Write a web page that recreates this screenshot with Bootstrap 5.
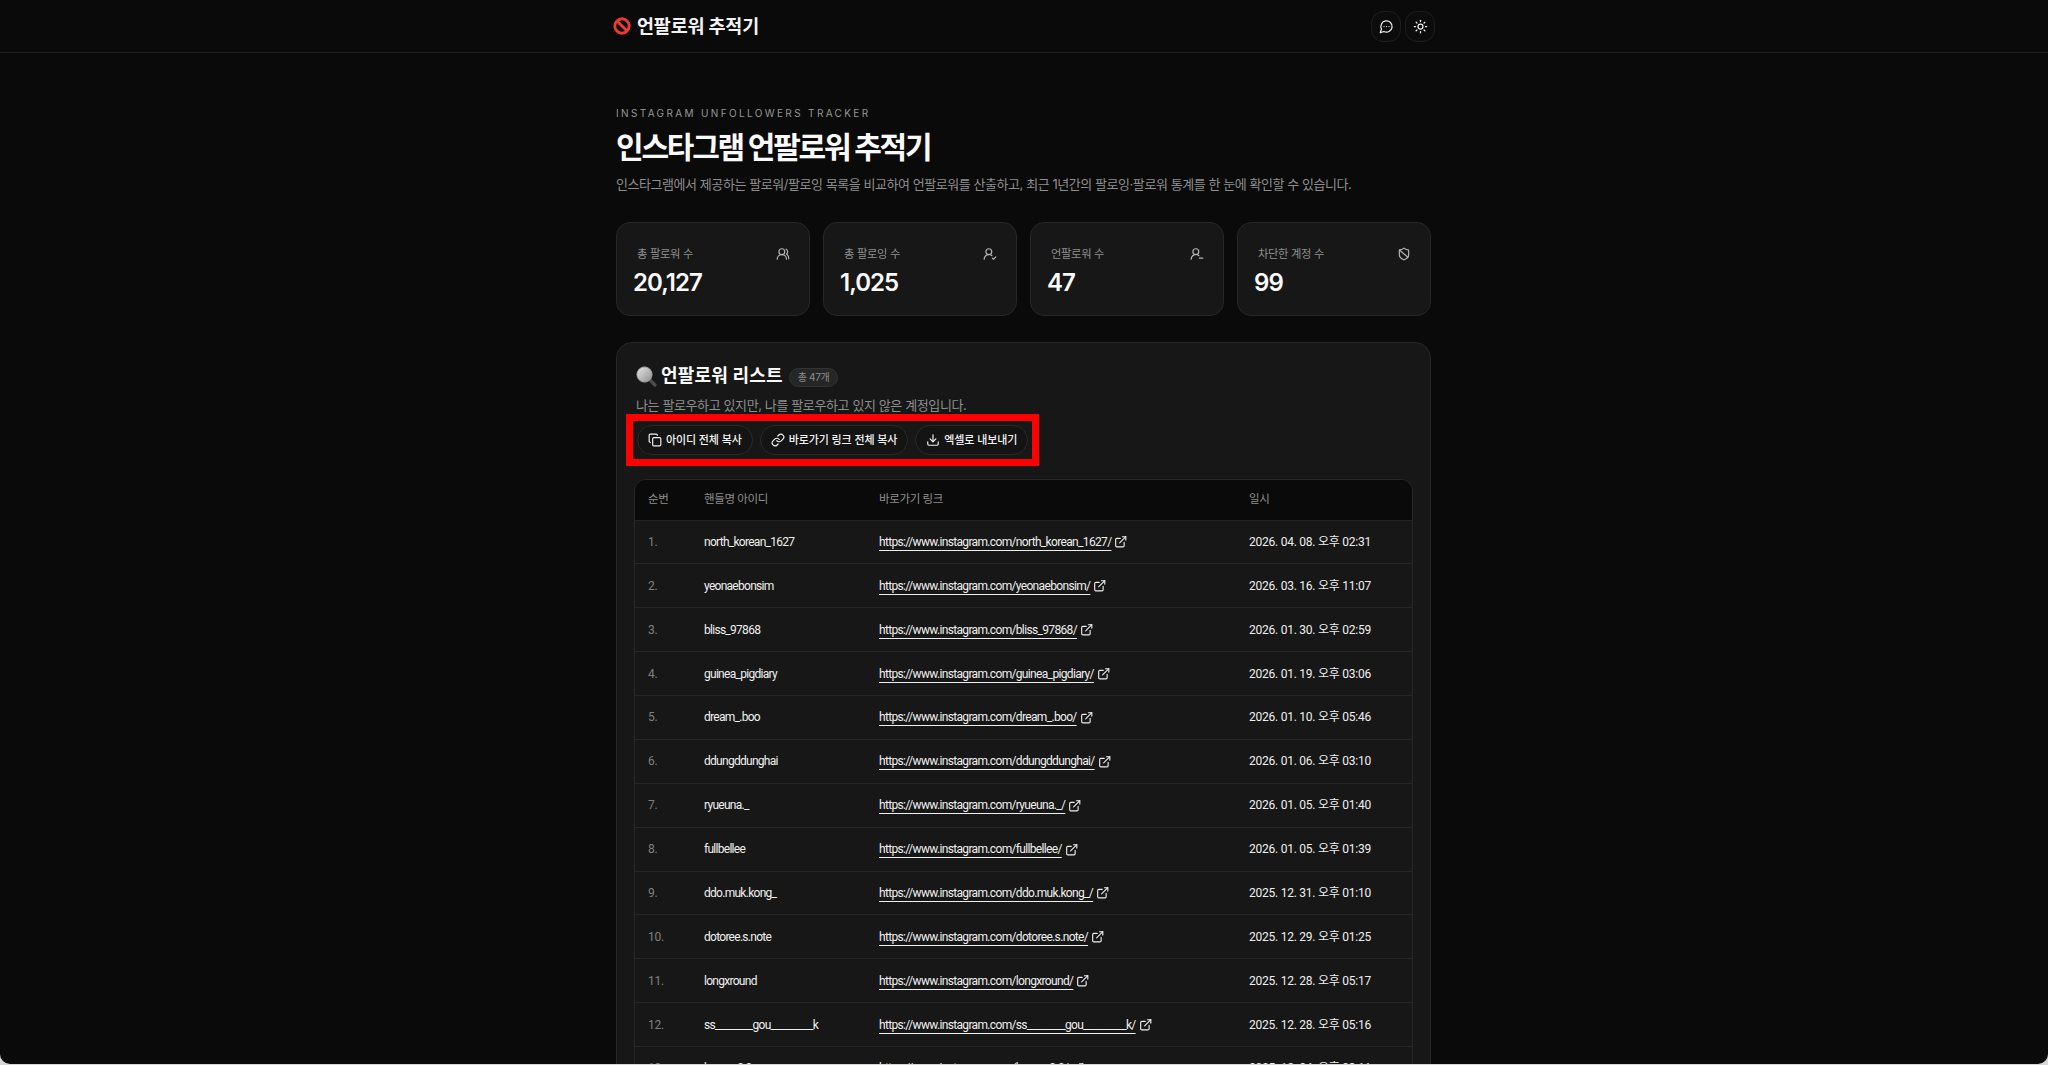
<!DOCTYPE html>
<html lang="ko">
  <head>
    <meta charset="UTF-8" />
    <meta name="viewport" content="width=device-width, initial-scale=1.0" />
    <title>인스타그램 언팔로워 추적기</title>

    <link
      rel="stylesheet"
      href="https://cdn.jsdelivr.net/npm/bootstrap@5.3.0/dist/css/bootstrap.min.css"
    />
    <style>
      html, body { height: 100%; overflow: hidden; }
      body {
        background: #d8d8d8;
        font-family: Inter, "Noto Sans CJK KR", sans-serif;
        color: #f2f2f2;
      }
      .screen {
        height: 1064px;
        overflow: hidden;
        background: #0a0a0a;
        border-radius: 0 0 10px 10px;
      }
      .wrap { width: 815px; margin-left: 616px; }
      .topbar { height: 53px; border-bottom: 1px solid #1f1f1f; }
      .brand { font-size: 18.5px; font-weight: 700; letter-spacing: -0.01em; gap: 6px; margin-left: -3px; line-height: 1; }
      .icon-btns { margin-right: -4px; }
      .icon-btn {
        width: 30px; height: 31px; padding: 0;
        border: 1px solid #1e1e1e; border-radius: 12px;
        background: #0c0c0c; color: #eee;
      }
      .icon-btn svg { width: 15px; height: 15px; }
      .kicker { font-size: 10px; letter-spacing: .236em; color: #969696; line-height: 14px; margin: 53px 0 0; }
      .title { font-size: 30px; font-weight: 700; letter-spacing: -0.074em; line-height: 38px; margin: 8px 0 0; color: #fafafa; }
      .lead-text { font-size: 13px; letter-spacing: -0.034em; color: #8e8e8e; line-height: 20px; margin: 8px 0 0; }
      .stats { --bs-gutter-x: 13px; margin-top: 28px; }
      .stat {
        height: 94px; border: 1px solid #272727; border-radius: 14px;
        background: #171717; padding: 22px 20px 0 16px;
      }
      .stat-label { font-size: 11.3px; letter-spacing: -0.03em; color: #8e8e8e; line-height: 18px; padding-left: 4px; }
      .stat-label svg { width: 14px; height: 14px; color: #b5b5b5; margin-right: -1px; }
      .stat-value { font-size: 24px; font-weight: 600; letter-spacing: -0.04em; line-height: 30px; margin-top: 5px; color: #fafafa; }
      .panel {
        margin-top: 26px; border: 1px solid #272727; border-radius: 16px;
        background: #171717; padding: 21px 17px 0 19px;
      }
      .panel-head { gap: 4px; line-height: 24px; }
      .panel-title { font-size: 18px; font-weight: 700; letter-spacing: .01em; margin: 0; color: #fafafa; line-height: 24px; }
      .count {
        font-size: 10px; font-weight: 400; letter-spacing: -0.03em; color: #8e8e8e;
        background: #262626; border: 1px solid #333; border-radius: 10px;
        padding: 0 8px; height: 19px; line-height: 17px; margin: 2px 0 0 2px;
      }
      .panel-sub { font-size: 13px; letter-spacing: -0.03em; color: #8e8e8e; line-height: 20px; margin: 7px 0 0; }
      .marked {
        border: 7px solid #f00; padding: 4px; gap: 7px;
        margin: -1px 0 0 -10px;
      }
      .pill {
        height: 30px; padding: 0 10px; gap: 4px;
        font-size: 11px; font-weight: 500; letter-spacing: -0.01em; white-space: nowrap;
        border: 1px solid #2a2a2a; border-radius: 15px;
        background: #141414; color: #f2f2f2;
      }
      .pill svg { width: 14px; height: 14px; }
      .table-box { margin: 13px 0 0 -2px; border: 1px solid #272727; border-radius: 12px 12px 0 0; overflow: hidden; width: 779px; }
      .unf-table { table-layout: fixed; margin: 0; font-family: Roboto, "Noto Sans CJK KR", sans-serif; font-size: 12px; letter-spacing: -0.02em;
        --bs-table-bg: #171717; --bs-table-color: #efefef; --bs-table-border-color: #262626; }
      .unf-table th { background: #0a0a0a; color: #8e8e8e; font-size: 11.5px; letter-spacing: -0.03em; font-weight: 400; height: 40px; padding: 0 0 0 13px; vertical-align: middle; border-bottom: 1px solid #232323; }
      .unf-table td { height: 43.88px; padding: 0 0 0 13px; vertical-align: middle; border-bottom: 1px solid #262626; }
      .unf-table td:first-child { color: #808080; }
      .unf-table td.handle { letter-spacing: -0.06em; }
      .unf-table td.link { letter-spacing: -0.055em; }
      .unf-table a { color: #efefef; text-decoration: underline; text-underline-offset: 4px; text-decoration-thickness: 1px; }
      .unf-table svg { width: 13.5px; height: 13.5px; margin-left: 3px; vertical-align: -3px; color: #efefef; }
      .ico { fill: none; stroke: currentColor; stroke-width: 2; stroke-linecap: round; stroke-linejoin: round; flex: none; }
    </style>
  </head>
  <body>
    <svg width="0" height="0" class="position-absolute">
      <defs>
        <linearGradient id="glass" x1="0" y1="0" x2="1" y2="1">
          <stop offset="0" stop-color="#e6e6e6" />
          <stop offset="1" stop-color="#8f8f8f" />
        </linearGradient>
      </defs>
      <symbol id="i-chat" viewBox="0 0 24 24"><path d="M7.9 20A9 9 0 1 0 4 16.1L2 22Z"/><path d="M8 12h.01"/><path d="M12 12h.01"/><path d="M16 12h.01"/></symbol>
      <symbol id="i-sun" viewBox="0 0 24 24"><circle cx="12" cy="12" r="4"/><path d="M12 2v2"/><path d="M12 20v2"/><path d="m4.93 4.93 1.41 1.41"/><path d="m17.66 17.66 1.41 1.41"/><path d="M2 12h2"/><path d="M20 12h2"/><path d="m6.34 17.66-1.41 1.41"/><path d="m19.07 4.93-1.41 1.41"/></symbol>
      <symbol id="i-users" viewBox="0 0 24 24"><path d="M18 21a8 8 0 0 0-16 0"/><circle cx="10" cy="8" r="5"/><path d="M22 20c0-3.37-2-6.5-4-8a5 5 0 0 0-.45-8.3"/></symbol>
      <symbol id="i-user-check" viewBox="0 0 24 24"><path d="M2 21a8 8 0 0 1 13.292-5.995"/><circle cx="10" cy="8" r="5"/><path d="m16 19 2 2 4-4"/></symbol>
      <symbol id="i-user-minus" viewBox="0 0 24 24"><path d="M2 21a8 8 0 0 1 13.292-5.995"/><circle cx="10" cy="8" r="5"/><path d="M22 19h-6"/></symbol>
      <symbol id="i-shield" viewBox="0 0 24 24"><path d="M20 13c0 5-3.5 7.5-7.66 8.95a1 1 0 0 1-.67-.01C7.5 20.5 4 18 4 13V6a1 1 0 0 1 1-1c2 0 4.5-1.2 6.24-2.72a1.17 1.17 0 0 1 1.52 0C14.51 3.81 17 5 19 5a1 1 0 0 1 1 1z"/><path d="m4.243 5.21 14.39 12.472"/></symbol>
      <symbol id="i-copy" viewBox="0 0 24 24"><rect width="14" height="14" x="8" y="8" rx="2"/><path d="M4 16c-1.1 0-2-.9-2-2V4c0-1.1.9-2 2-2h10c1.1 0 2 .9 2 2"/></symbol>
      <symbol id="i-link" viewBox="0 0 24 24"><path d="M10 13a5 5 0 0 0 7.54.54l3-3a5 5 0 0 0-7.07-7.07l-1.72 1.71"/><path d="M14 11a5 5 0 0 0-7.54-.54l-3 3a5 5 0 0 0 7.07 7.07l1.71-1.71"/></symbol>
      <symbol id="i-download" viewBox="0 0 24 24"><path d="M21 15v4a2 2 0 0 1-2 2H5a2 2 0 0 1-2-2v-4"/><path d="m7 10 5 5 5-5"/><path d="M12 15V3"/></symbol>
      <symbol id="i-external" viewBox="0 0 24 24"><path d="M15 3h6v6"/><path d="M10 14 21 3"/><path d="M18 13v6a2 2 0 0 1-2 2H5a2 2 0 0 1-2-2V8a2 2 0 0 1 2-2h6"/></symbol>
    </svg>

    <div class="screen">
      <header class="topbar">
        <div class="wrap h-100 d-flex align-items-center justify-content-between">
          <div class="brand d-flex align-items-center">
            <svg width="18" height="18" viewBox="0 0 20 20" aria-hidden="true">
              <circle cx="10" cy="10" r="8" fill="none" stroke="#ec3b30" stroke-width="3.2" />
              <path d="M4.4 4.4 15.6 15.6" stroke="#ec3b30" stroke-width="3.2" />
            </svg>
            <span>언팔로워 추적기</span>
          </div>
          <div class="icon-btns d-flex gap-1">
            <button class="btn icon-btn d-flex align-items-center justify-content-center" type="button"><svg class="ico"><use href="#i-chat" /></svg></button>
            <button class="btn icon-btn d-flex align-items-center justify-content-center" type="button"><svg class="ico"><use href="#i-sun" /></svg></button>
          </div>
        </div>
      </header>

      <main class="wrap">
        <p class="kicker">INSTAGRAM UNFOLLOWERS TRACKER</p>
        <h1 class="title">인스타그램 언팔로워 추적기</h1>
        <p class="lead-text">인스타그램에서 제공하는 팔로워/팔로잉 목록을 비교하여 언팔로워를 산출하고, 최근 1년간의 팔로잉·팔로워 통계를 한 눈에 확인할 수 있습니다.</p>

        <div class="row stats" id="stats"></div>

        <section class="panel">
          <div class="panel-head d-flex align-items-center">
            <svg width="21" height="21" viewBox="0 0 21 21" aria-hidden="true">
              <path d="M13 13 19 19" stroke="#4d4d4d" stroke-width="3.2" stroke-linecap="round" />
              <circle cx="8.5" cy="8.5" r="7.6" fill="url(#glass)" stroke="#a0a0a0" />
            </svg>
            <h2 class="panel-title">언팔로워 리스트</h2>
            <span class="count">총 47개</span>
          </div>
          <p class="panel-sub">나는 팔로우하고 있지만, 나를 팔로우하고 있지 않은 계정입니다.</p>

          <div class="marked d-inline-flex">
            <button class="btn pill d-inline-flex align-items-center" type="button"><svg class="ico"><use href="#i-copy" /></svg>아이디 전체 복사</button>
            <button class="btn pill d-inline-flex align-items-center" type="button"><svg class="ico"><use href="#i-link" /></svg>바로가기 링크 전체 복사</button>
            <button class="btn pill d-inline-flex align-items-center" type="button"><svg class="ico"><use href="#i-download" /></svg>엑셀로 내보내기</button>
          </div>

          <div class="table-box">
            <table class="table unf-table">
              <colgroup>
                <col style="width: 56px" />
                <col style="width: 175px" />
                <col style="width: 370px" />
                <col style="width: 178px" />
              </colgroup>
              <thead>
                <tr><th>순번</th><th>핸들명 아이디</th><th>바로가기 링크</th><th>일시</th></tr>
              </thead>
              <tbody id="rows"></tbody>
            </table>
          </div>
        </section>
      </main>
    </div>

    <script src="https://cdn.jsdelivr.net/npm/bootstrap@5.3.0/dist/js/bootstrap.bundle.min.js"></script>
    <script>
      const stats = [
        ["총 팔로워 수", "20,127", "i-users"],
        ["총 팔로잉 수", "1,025", "i-user-check"],
        ["언팔로워 수", "47", "i-user-minus"],
        ["차단한 계정 수", "99", "i-shield"],
      ];
      document.getElementById("stats").innerHTML = stats
        .map(
          ([label, value, icon]) => `
          <div class="col-3">
            <div class="stat">
              <div class="stat-label d-flex align-items-center justify-content-between">
                <span>${label}</span><svg class="ico"><use href="#${icon}" /></svg>
              </div>
              <div class="stat-value">${value}</div>
            </div>
          </div>`
        )
        .join("");

      const rows = [
        ["north_korean_1627", "2026. 04. 08. 오후 02:31"],
        ["yeonaebonsim", "2026. 03. 16. 오후 11:07"],
        ["bliss_97868", "2026. 01. 30. 오후 02:59"],
        ["guinea_pigdiary", "2026. 01. 19. 오후 03:06"],
        ["dream_.boo", "2026. 01. 10. 오후 05:46"],
        ["ddungddunghai", "2026. 01. 06. 오후 03:10"],
        ["ryueuna._", "2026. 01. 05. 오후 01:40"],
        ["fullbellee", "2026. 01. 05. 오후 01:39"],
        ["ddo.muk.kong_", "2025. 12. 31. 오후 01:10"],
        ["dotoree.s.note", "2025. 12. 29. 오후 01:25"],
        ["longxround", "2025. 12. 28. 오후 05:17"],
        ["ss________gou_________k", "2025. 12. 28. 오후 05:16"],
        ["hyeon_0.0", "2025. 12. 24. 오후 03:11"],
      ];
      document.getElementById("rows").innerHTML = rows
        .map(
          ([id, date], i) => `
          <tr>
            <td>${i + 1}.</td>
            <td class="handle">${id}</td>
            <td class="link"><a href="https://www.instagram.com/${id}/">https://www.instagram.com/${id}/</a><svg class="ico"><use href="#i-external" /></svg></td>
            <td>${date}</td>
          </tr>`
        )
        .join("");
    </script>
  </body>
</html>
